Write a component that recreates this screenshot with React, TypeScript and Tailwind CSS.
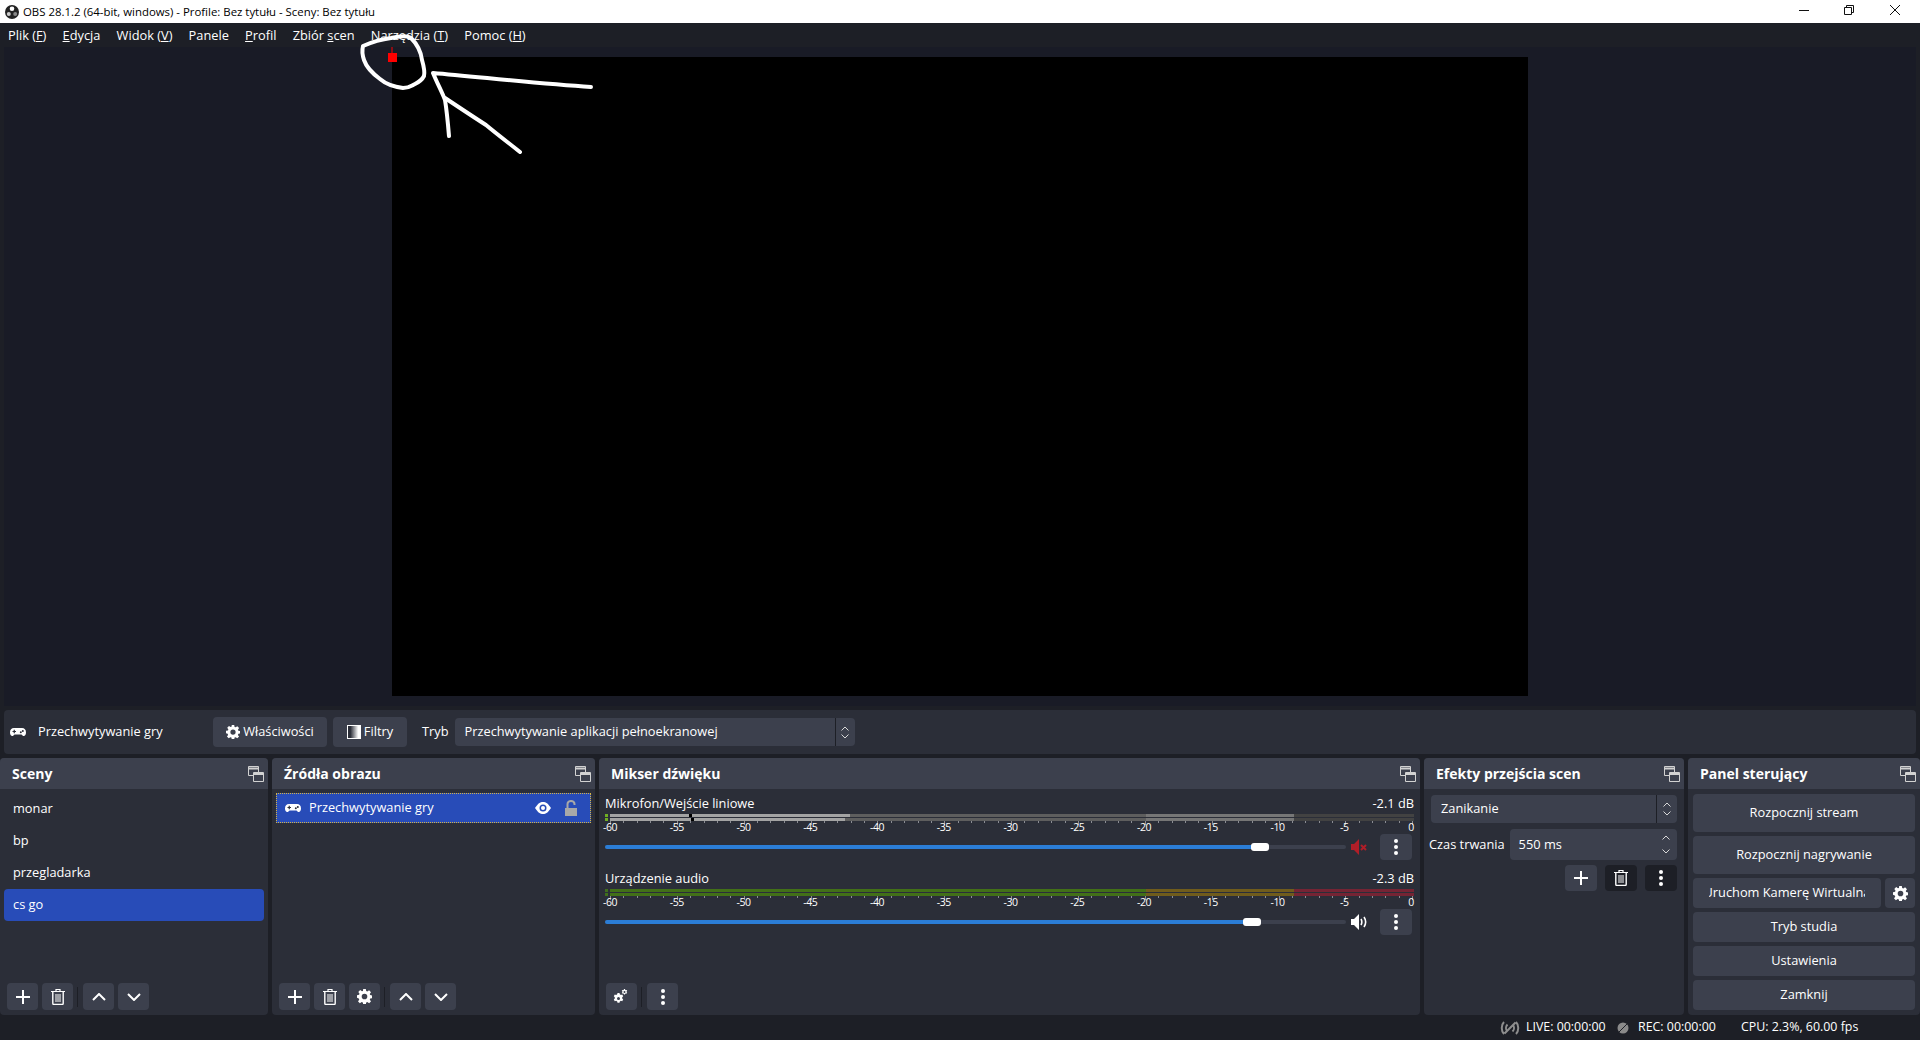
import type { ReactNode } from "react";

const font = "font-['Open_Sans',sans-serif]";

function DockIcon() {
  return (
    <svg width="16" height="16" viewBox="0 0 16 16" fill="none" stroke="#d2d2d2" strokeWidth="1">
      <path d="M.5.5h10v9H.5z" fill="#3c404d" />
      <path d="M.5 2.500h10" strokeWidth="2" />
      <path d="M5.500 6.500h10v9h-10z" fill="#3c404d" />
      <path d="M5.500 8h10" strokeWidth="2" />
    </svg>
  );
}

function Gamepad() {
  return (
    <svg width="16" height="8" viewBox="0 0 16 8">
      <path
        d="M4 0h8c2.500 0 4 1.500 4 4.500C16 6.800 15 8 13.800 8c-1 0-1.600-.6-2.300-1.500h-7C3.800 7.400 3.200 8 2.200 8 1 8 0 6.800 0 4.500 0 1.500 1.500 0 4 0z"
        fill="#fff"
      />
      <path d="M2.500 3.500h3.500M4.250 1.800v3.400" stroke="#2b2e38" strokeWidth="1.200" />
      <circle cx="10.800" cy="4.200" r="1" fill="#2b2e38" />
      <circle cx="12.800" cy="3" r="1" fill="#2b2e38" />
    </svg>
  );
}

function Gear({ size = 16 }: { size?: number }) {
  return (
    <svg width={size} height={size} viewBox="0 0 16 16">
      <path
        fill="#fff"
        fillRule="evenodd"
        d="M6.600 0h2.800l.4 2.200 1.200.5 1.900-1.300 2 2-1.300 1.900.5 1.200 2.200.4v2.800l-2.200.4-.5 1.200 1.300 1.900-2 2-1.900-1.300-1.200.5-.4 2.200H6.600l-.4-2.200-1.200-.5-1.900 1.300-2-2 1.300-1.900-.5-1.200L0 9.400V6.600l2.200-.4.5-1.200-1.300-1.900 2-2L5.300 2.400l1-.3zM8 5a3 3 0 1 0 0 6 3 3 0 0 0 0-6z"
      />
    </svg>
  );
}

function Plus() {
  return (
    <svg width="14" height="14" viewBox="0 0 14 14" stroke="#fff" strokeWidth="2">
      <path d="M7 0v14M0 7h14" />
    </svg>
  );
}

function Trash() {
  return (
    <svg width="14" height="16" viewBox="0 0 14 16" fill="none" stroke="#fff">
      <path d="M0 2.500h14M5 2V.5h4V2" strokeWidth="1.200" />
      <path d="M1.800 3v11.200c0 .8.500 1.300 1.200 1.300h8c.7 0 1.200-.5 1.200-1.300V3" strokeWidth="1.400" />
      <path d="M5 5v8M7 5v8M9 5v8" strokeWidth="1" />
    </svg>
  );
}

function Chevron({ up }: { up?: boolean }) {
  return (
    <svg width="14" height="8" viewBox="0 0 14 8" fill="none" stroke="#fff" strokeWidth="2">
      <path d={up ? "M1 7l6-6 6 6" : "M1 1l6 6 6-6"} />
    </svg>
  );
}

function Dots() {
  return (
    <svg width="4" height="16" viewBox="0 0 4 16" fill="#fff">
      <circle cx="2" cy="2" r="2" />
      <circle cx="2" cy="8" r="2" />
      <circle cx="2" cy="14" r="2" />
    </svg>
  );
}

function UpDown({ gap = "gap-[4px]" }: { gap?: string }) {
  return (
    <div className={`flex flex-col items-center ${gap}`}>
      <svg width="8" height="5" viewBox="0 0 8 5" fill="none" stroke="#d8d8d8">
        <path d="M.5 4.500L4 1l3.500 3.500" />
      </svg>
      <svg width="8" height="5" viewBox="0 0 8 5" fill="none" stroke="#d8d8d8">
        <path d="M.5.500L4 4l3.500-3.500" />
      </svg>
    </div>
  );
}

function ToolBtn({ children, dark }: { children: ReactNode; dark?: boolean }) {
  return (
    <button
      className={`flex h-[27px] w-[31px] items-center justify-center rounded-[4px] ${dark ? "bg-[#1d1f26]" : "bg-[#3c404d]"}`}
    >
      {children}
    </button>
  );
}

function Dock({ title, className, children }: { title: string; className: string; children: ReactNode }) {
  return (
    <section className={`flex flex-col overflow-hidden rounded-[4px] bg-[#2b2e38] ${className}`}>
      <header className="flex h-[31px] shrink-0 items-center justify-between bg-[#3c404d] pl-[12px] pr-[4px]">
        <h2 className="text-[14px] font-bold leading-[30px] text-white">{title}</h2>
        <DockIcon />
      </header>
      {children}
    </section>
  );
}

const menu: [string, string, string][] = [
  ["Plik (", "F", ")"],
  ["", "E", "dycja"],
  ["Widok (", "V", ")"],
  ["Panele", "", ""],
  ["", "P", "rofil"],
  ["Zbiór ", "s", "cen"],
  ["Narzędzia (", "T", ")"],
  ["Pomoc (", "H", ")"],
];

const scaleLabels = ["-60", "-55", "-50", "-45", "-40", "-35", "-30", "-25", "-20", "-15", "-10", "-5", "0"];

function Scale() {
  const ticks = Array.from({ length: 61 }, (_, i) => i);
  return (
    <div className="relative ml-[5px] h-[13px] w-[804px]">
      <svg width="804" height="6" className="block" stroke="#8b8d94">
        {ticks.map((i) => {
          const x = Math.round(i * 13.37) + 0.5;
          return <line key={i} x1={x} x2={x} y1="0" y2={i % 5 === 0 ? 4 : 2} />;
        })}
      </svg>
      <div className="absolute left-0 right-[3px] top-[-1px] flex justify-between">
        {scaleLabels.map((label) => (
          <div key={label} className="flex w-0 justify-center">
            <span className="text-[10.500px] leading-[14px] tracking-[-0.5px] text-white">{label}</span>
          </div>
        ))}
      </div>
    </div>
  );
}

function Meter({ active, top, bottom }: { active?: boolean; top: number; bottom: number }) {
  const bar = (lit: number, peak: number) => (
    <div className="relative flex h-[3px]">
      <div className={`mr-[2px] h-[3px] w-[3px] ${active ? "bg-[#3f6e1b]" : "bg-[#6fae23]"}`} />
      {active ? (
        <>
          <div className="w-[536px] bg-[#427018]" />
          <div className="w-[148px] bg-[#705c1c]" />
          <div className="w-[120px] bg-[#752434]" />
        </>
      ) : (
        <>
          <div className="bg-[#a3a3a3]" style={{ width: lit }} />
          <div className="bg-[#5e5e5e]" style={{ width: 536 - lit }} />
          <div className="w-[148px] bg-[#767676]" />
          <div className="w-[120px] bg-[#424242]" />
          <div className="absolute top-0 h-[3px] w-[3px] bg-black" style={{ left: peak }} />
        </>
      )}
    </div>
  );
  return (
    <div className="flex flex-col gap-[1px]">
      {bar(top, 84)}
      {bar(bottom, 86)}
    </div>
  );
}

function MixerChannel({
  name,
  db,
  active,
  level,
  icon,
}: {
  name: string;
  db: string;
  active?: boolean;
  level: number;
  icon: ReactNode;
}) {
  return (
    <div className="flex h-[75px] flex-col">
      <div className="flex h-[18px] items-center justify-between text-[12.800px] text-white">
        <span>{name}</span>
        <span>{db}</span>
      </div>
      <div className="mt-[1px]">
        <Meter active={active} top={240} bottom={235} />
      </div>
      <Scale />
      <div className="flex h-[26px] items-center">
        <div className="relative h-[4px] w-[741px] rounded-full bg-[#3c404d]">
          <div className="h-[4px] rounded-full bg-[#2b7dd6]" style={{ width: level + 6 }} />
          <div
            className="absolute top-[-2px] h-[8px] w-[18px] rounded-[3px] bg-white"
            style={{ left: level }}
          />
        </div>
        <div className="ml-[5px] flex w-[16px] justify-center">{icon}</div>
        <div className="ml-[13px]">
          <button className="flex h-[26px] w-[32px] items-center justify-center rounded-[4px] bg-[#3c404d]">
            <Dots />
          </button>
        </div>
      </div>
    </div>
  );
}

function ControlBtn({ label, tall }: { label: string; tall?: boolean }) {
  return (
    <button
      className={`flex w-full items-center justify-center rounded-[4px] bg-[#3c404d] text-[12.800px] text-white ${tall ? "h-[38px]" : "h-[30px]"}`}
    >
      {label}
    </button>
  );
}

export default function App() {
  return (
    <div className={`relative flex h-[1040px] w-[1920px] flex-col overflow-hidden bg-[#1d1f26] ${font}`}>
      {/* window title */}
      <div className="flex h-[23px] shrink-0 items-center bg-white pl-[5px]">
        <svg width="14" height="14" viewBox="0 0 14 14">
          <circle cx="7" cy="7" r="7" fill="#222" />
          <circle cx="7" cy="3.800" r="2.300" fill="#fff" />
          <circle cx="3.800" cy="9" r="2" fill="#ccc" />
          <circle cx="10.200" cy="9" r="2" fill="#888" />
        </svg>
        <span className="ml-[4px] text-[11.400px] text-black">
          OBS 28.1.2 (64-bit, windows) - Profile: Bez tytułu - Sceny: Bez tytułu
        </span>
        <div className="mb-[3px] ml-auto flex items-center">
          <svg width="10" height="10" viewBox="0 0 10 10" stroke="#111" className="mr-[35px]">
            <path d="M0 5.500h10" />
          </svg>
          <svg width="10" height="10" viewBox="0 0 10 10" fill="none" stroke="#111" className="mr-[36px]">
            <path d="M.5 2.500h7v7h-7zM2.500 2.500v-2h7v7h-2" />
          </svg>
          <svg width="10" height="10" viewBox="0 0 10 10" stroke="#111" className="mr-[20px]">
            <path d="M0 0l10 10M10 0L0 10" />
          </svg>
        </div>
      </div>

      {/* menu */}
      <nav className="flex h-[24px] shrink-0 items-center gap-[16.200px] pl-[8px] pt-[1px] text-[12.800px] text-white">
        {menu.map(([a, u, b]) => (
          <span key={a + u + b} className="whitespace-nowrap">
            {a}
            <span className="underline">{u}</span>
            {b}
          </span>
        ))}
      </nav>

      {/* preview */}
      <main className="mx-[4px] flex h-[659px] shrink-0 items-center justify-center bg-[#191b26]">
        <div className="h-[639px] w-[1136px] bg-black" />
      </main>

      {/* context bar */}
      <div className="mx-[4px] mt-[4px] flex h-[44px] shrink-0 items-center rounded-[4px] bg-[#2b2e38] text-[12.800px] text-white">
        <div className="ml-[6px] w-[16px]">
          <Gamepad />
        </div>
        <span className="ml-[12px] w-[175px]">Przechwytywanie gry</span>
        <button className="flex h-[30px] w-[114px] items-center justify-center gap-[3px] rounded-[4px] bg-[#3c404d]">
          <Gear size={14} />
          Właściwości
        </button>
        <button className="ml-[6px] flex h-[30px] w-[74px] items-center justify-center gap-[3px] rounded-[4px] bg-[#3c404d]">
          <svg width="14" height="14" viewBox="0 0 14 14">
            <defs>
              <linearGradient id="filterFade">
                <stop offset="0.2" stopColor="#2b2e38" />
                <stop offset="0.85" stopColor="#fff" />
              </linearGradient>
            </defs>
            <rect x="1" y="1" width="12" height="12" fill="url(#filterFade)" />
            <rect x=".5" y=".5" width="13" height="13" fill="none" stroke="#fff" />
          </svg>
          Filtry
        </button>
        <span className="ml-[15px]">Tryb</span>
        <div className="ml-[6px] flex h-[28px] w-[400px] items-center rounded-[4px] bg-[#3c404d]">
          <span className="flex-1 pl-[10px]">Przechwytywanie aplikacji pełnoekranowej</span>
          <div className="flex h-full w-[20px] items-center justify-center border-l border-[#1d1f26]">
            <UpDown gap="gap-[3px]" />
          </div>
        </div>
      </div>

      {/* docks */}
      <div className="mt-[4px] flex h-[257px] shrink-0 gap-[4px]">
        <Dock title="Sceny" className="w-[268px]">
          <div className="flex flex-1 flex-col px-[4px] pt-[4px] text-[12.800px] text-white">
            {["monar", "bp", "przegladarka"].map((s) => (
              <div key={s} className="flex h-[32px] items-center pl-[9px]">
                {s}
              </div>
            ))}
            <div className="flex h-[32px] items-center rounded-[4px] bg-[#284cb8] pl-[9px]">cs go</div>
          </div>
          <div className="flex h-[32px] items-start gap-[4px] pl-[7px]">
            <ToolBtn><Plus /></ToolBtn>
            <ToolBtn><Trash /></ToolBtn>
            <div className="mr-[1px] mt-[4px] h-[20px] w-px bg-[#1d1f26]" />
            <ToolBtn><Chevron up /></ToolBtn>
            <ToolBtn><Chevron /></ToolBtn>
          </div>
        </Dock>

        <Dock title="Źródła obrazu" className="w-[323px]">
          <div className="flex-1 px-[4px] pt-[4px] text-[12.800px] text-white">
            <div className="flex h-[30px] items-center border border-dotted border-[#d6b544] bg-[#284cb8] pl-[8px]">
              <Gamepad />
              <span className="ml-[8px] flex-1">Przechwytywanie gry</span>
              <svg width="16" height="12" viewBox="0 0 16 12" className="mr-[14px]">
                <path d="M0 6C3 1.500 5 0 8 0s5 1.500 8 6c-3 4.500-5 6-8 6S3 10.500 0 6z" fill="#fff" />
                <circle cx="8" cy="6" r="3.500" fill="#284cb8" />
                <circle cx="8" cy="6" r="2" fill="#fff" />
              </svg>
              <svg width="12" height="16" viewBox="0 0 12 16" className="mr-[13px]">
                <rect y="8" width="12" height="8" fill="#a8a8a8" />
                <path d="M2.500 8V4a3.500 3 0 0 1 7 0v1" fill="none" stroke="#a8a8a8" strokeWidth="2" />
              </svg>
            </div>
          </div>
          <div className="flex h-[32px] items-start gap-[4px] pl-[7px]">
            <ToolBtn><Plus /></ToolBtn>
            <ToolBtn><Trash /></ToolBtn>
            <ToolBtn><Gear size={15} /></ToolBtn>
            <div className="mr-[1px] mt-[4px] h-[20px] w-px bg-[#1d1f26]" />
            <ToolBtn><Chevron up /></ToolBtn>
            <ToolBtn><Chevron /></ToolBtn>
          </div>
        </Dock>

        <Dock title="Mikser dźwięku" className="w-[821px]">
          <div className="flex-1 pl-[6px] pr-[6px] pt-[6px]">
            <MixerChannel
              name="Mikrofon/Wejście liniowe"
              db="-2.1 dB"
              level={646}
              icon={
                <svg width="16" height="16" viewBox="0 0 16 16" fill="#b01e28">
                  <path d="M0 5h3l5-5v16l-5-5H0z" />
                  <path d="M10 6l5 5M15 6l-5 5" stroke="#b01e28" strokeWidth="2" />
                </svg>
              }
            />
            <MixerChannel
              name="Urządzenie audio"
              db="-2.3 dB"
              active
              level={638}
              icon={
                <svg width="16" height="16" viewBox="0 0 16 16" fill="none">
                  <path d="M0 5h3l5-5v16l-5-5H0z" fill="#fff" />
                  <path d="M10 5c1 1.800 1 4.200 0 6M13 3c2 3 2 7 0 10" stroke="#fff" strokeWidth="1.600" />
                </svg>
              }
            />
          </div>
          <div className="flex h-[32px] items-start gap-[4px] pl-[7px]">
            <ToolBtn>
              <svg width="16" height="16" viewBox="0 0 16 16" fill="#fff" className="mr-[3px]">
                <path
                  fillRule="evenodd"
                  d="M5.500 4h2l.3 1.300 1.100.6 1.300-.4 1 1.700-1 1 0 1.300 1 1-1 1.700-1.300-.4-1.100.6-.3 1.300h-2l-.3-1.300-1.100-.6-1.300.4-1-1.700 1-1v-1.300l-1-1 1-1.700 1.300.4 1.100-.6zM6.500 8a1.500 1.500 0 1 0 0 3 1.500 1.500 0 0 0 0-3z"
                />
                <path
                  fillRule="evenodd"
                  d="M12 0h1l.2.800.7.400.8-.2.5.800-.6.600v.8l.6.600-.5.800-.8-.2-.7.400-.2.800h-1l-.2-.8-.7-.4-.8.2-.5-.8.6-.6v-.8l-.6-.6.5-.8.8.2.700-.4zM12.500 2a1 1 0 1 0 0 2 1 1 0 0 0 0-2z"
                />
              </svg>
            </ToolBtn>
            <div className="mr-[1px] mt-[4px] h-[20px] w-px bg-[#1d1f26]" />
            <ToolBtn><Dots /></ToolBtn>
          </div>
        </Dock>

        <Dock title="Efekty przejścia scen" className="w-[260px]">
          <div className="flex flex-1 flex-col pl-[5px] pr-[7px] pt-[6px] text-[12.800px] text-white">
            <div className="ml-[2px] flex h-[28px] items-center rounded-[4px] bg-[#3c404d]">
              <span className="flex-1 pl-[10px]">Zanikanie</span>
              <div className="flex h-full w-[21px] items-center justify-center border-l border-[#1d1f26]">
                <UpDown />
              </div>
            </div>
            <div className="mt-[6px] flex items-center gap-[5px]">
              <span className="whitespace-nowrap">Czas trwania</span>
              <div className="flex h-[31px] flex-1 items-center justify-between rounded-[4px] bg-[#3c404d] pl-[9px] pr-[7px]">
                <span>550 ms</span>
                <UpDown gap="gap-[9px]" />
              </div>
            </div>
            <div className="mt-[5px] flex justify-end gap-[8px]">
              <button className="flex h-[26px] w-[32px] items-center justify-center rounded-[4px] bg-[#3c404d]">
                <Plus />
              </button>
              <button className="flex h-[26px] w-[32px] items-center justify-center rounded-[4px] bg-[#1d1f26]">
                <Trash />
              </button>
              <button className="flex h-[26px] w-[32px] items-center justify-center rounded-[4px] bg-[#1d1f26]">
                <Dots />
              </button>
            </div>
          </div>
        </Dock>

        <Dock title="Panel sterujący" className="flex-1">
          <div className="flex flex-col gap-[4px] pl-[5px] pr-[5px] pt-[5px]">
            <ControlBtn label="Rozpocznij stream" tall />
            <ControlBtn label="Rozpocznij nagrywanie" tall />
            <div className="flex gap-[4px]">
              <button className="flex h-[30px] w-[188px] items-center justify-center rounded-[4px] bg-[#3c404d] text-[12.800px] text-white">
                <span className="flex w-[156px] justify-center overflow-hidden whitespace-nowrap">
                  Uruchom Kamerę Wirtualną
                </span>
              </button>
              <button className="flex h-[30px] w-[30px] items-center justify-center rounded-[4px] bg-[#3c404d]">
                <Gear size={15} />
              </button>
            </div>
            <ControlBtn label="Tryb studia" />
            <ControlBtn label="Ustawienia" />
            <ControlBtn label="Zamknij" />
          </div>
        </Dock>
      </div>

      {/* status bar */}
      <footer className="flex h-[25px] shrink-0 items-center pl-[1500px] text-[12.400px] text-white">
        <svg width="20" height="16" viewBox="0 0 20 16" fill="none" stroke="#8e8e8e" strokeWidth="2">
          <path d="M4 2C1 5 1 11 4 14M16 2c3 3 3 9 0 12M7.500 4.500c-2 2-2 5 0 7M12.500 4.500c2 2 2 5 0 7M4.500 13.500L15.500 2.500" />
        </svg>
        <span className="ml-[6px] w-[91px]">LIVE: 00:00:00</span>
        <svg width="12" height="12" viewBox="0 0 12 12">
          <circle cx="6" cy="6" r="5.500" fill="#8a8a8a" />
          <path d="M0 12L12 0" stroke="#1d1f26" strokeWidth="1" />
        </svg>
        <span className="ml-[9px] w-[103px]">REC: 00:00:00</span>
        <span>CPU: 2.3%, 60.00 fps</span>
      </footer>

      {/* red marker and hand-drawn annotation over the preview */}
      <svg width="1920" height="200" className="pointer-events-none absolute left-0 top-0" fill="none">
        <path d="M392 47v6" stroke="#ff0000" />
        <rect x="388" y="53" width="9" height="9" fill="#ff0000" />
        <g stroke="#fff" strokeWidth="4" strokeLinejoin="round" strokeLinecap="round">
          <path d="M363 46C372 42 383 39 391 38C400 36 408 36 411 38C417 44 421 52 422 60C424 67 425 72 424 76C422 80 419 82 415 84C411 86 409 88 403 88C395 87 387 85 380 79C372 73 366 66 364 60C362 54 362 50 363 46z" />
          <path d="M591 87C540 84 480 77 433 73C438 85 442 92 445 100C447 112 448 124 449 136" />
          <path d="M445 98C460 108 472 116 486 125C498 135 510 144 520 152" />
        </g>
      </svg>
    </div>
  );
}
